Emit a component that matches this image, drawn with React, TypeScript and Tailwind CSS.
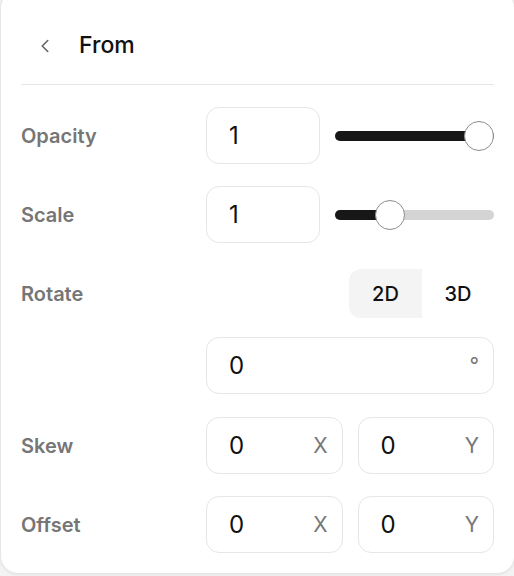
import { ChevronLeft } from "lucide-react";

function Field({ value, suffix, className = "" }: { value: string; suffix?: string; className?: string }) {
  return (
    <div
      className={`flex h-[57px] items-center justify-between rounded-[13px] border border-[#e6e6e6] bg-white pl-[22px] pr-[14px] ${className}`}
    >
      <span className="text-[24px] leading-none text-[#111]">{value}</span>
      {suffix && <span className="text-[21px] leading-none text-[#777]">{suffix}</span>}
    </div>
  );
}

function Slider({ percent }: { percent: number }) {
  return (
    <div className="relative ml-[15px] h-[30px] flex-1">
      <div className="absolute inset-x-0 top-[10px] h-[10px] rounded-full bg-[#d4d4d4]" />
      <div
        className="absolute left-0 top-[10px] h-[10px] rounded-full bg-[#171717]"
        style={{ width: `${percent}%` }}
      />
      <div
        className="absolute top-[0px] h-[30px] w-[30px] -translate-x-1/2 rounded-full border border-[#8c8c8c] bg-white"
        style={{ left: `calc(15px + (100% - 30px) * ${percent / 100})` }}
      />
    </div>
  );
}

function Label({ children }: { children: React.ReactNode }) {
  return <span className="text-[20px] font-semibold text-[#767676]">{children}</span>;
}

export default function App() {
  return (
    <div className="h-[576px] w-[514px] overflow-hidden bg-[#f3f3f3] font-['Inter',sans-serif]">
      <div className="-mt-[10px] h-[584px] w-[515px] rounded-[18px] border border-[#e6e6e6] bg-white pt-[10px] shadow-[0_1px_3px_rgba(0,0,0,0.06)]">
        {/* Header */}
        <div className="mx-[20px] flex h-[84px] items-center border-b border-[#e5e5e5] pt-[6px]">
          <ChevronLeft className="ml-[13px] h-[22px] w-[22px] text-[#666]" strokeWidth={1.75} />
          <span className="ml-[23px] text-[23px] font-medium text-[#111]">From</span>
        </div>

        <div className="px-[20px] pt-[22px]">
          {/* Opacity */}
          <div className="flex items-center">
            <div className="w-[185px]">
              <Label>Opacity</Label>
            </div>
            <Field value="1" className="w-[114px]" />
            <Slider percent={100} />
          </div>

          {/* Scale */}
          <div className="mt-[22px] flex items-center">
            <div className="w-[185px]">
              <Label>Scale</Label>
            </div>
            <Field value="1" className="w-[114px]" />
            <Slider percent={31} />
          </div>

          {/* Rotate */}
          <div className="mt-[26px] flex h-[49px] items-center justify-between">
            <Label>Rotate</Label>
            <div className="flex h-full">
              <div className="flex w-[73px] items-center justify-center rounded-l-[12px] bg-[#f4f4f4] text-[20px] font-medium text-[#111]">
                2D
              </div>
              <div className="flex w-[72px] items-center justify-center text-[20px] font-medium text-[#111]">
                3D
              </div>
            </div>
          </div>

          <div className="mt-[19px] flex">
            <div className="w-[185px]" />
            <Field value="0" suffix="°" className="flex-1" />
          </div>

          {/* Skew */}
          <div className="mt-[23px] flex items-center">
            <div className="w-[185px]">
              <Label>Skew</Label>
            </div>
            <div className="flex flex-1 gap-[15px]">
              <Field value="0" suffix="X" className="flex-1" />
              <Field value="0" suffix="Y" className="flex-1" />
            </div>
          </div>

          {/* Offset */}
          <div className="mt-[22px] flex items-center">
            <div className="w-[185px]">
              <Label>Offset</Label>
            </div>
            <div className="flex flex-1 gap-[15px]">
              <Field value="0" suffix="X" className="flex-1" />
              <Field value="0" suffix="Y" className="flex-1" />
            </div>
          </div>
        </div>
      </div>
    </div>
  );
}
